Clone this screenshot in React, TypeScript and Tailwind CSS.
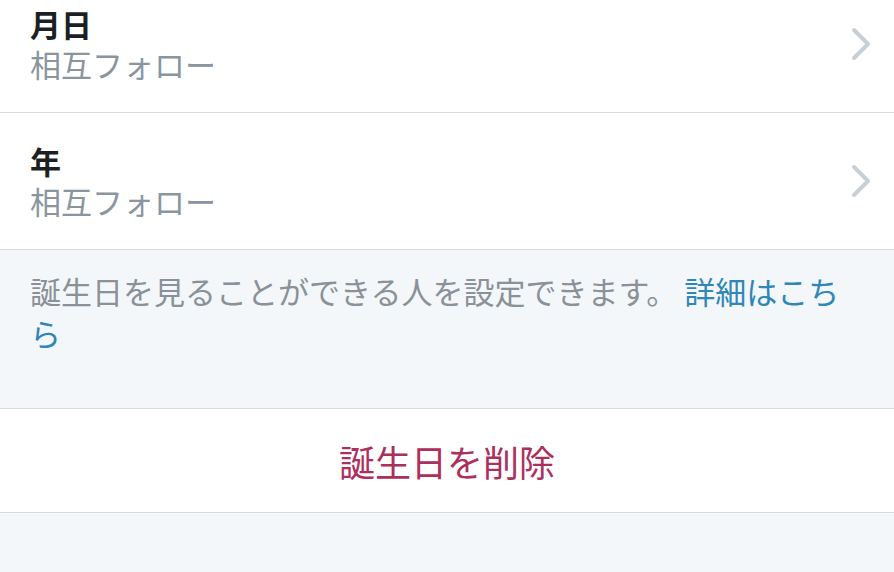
const font = { fontFamily: '"Noto Sans CJK JP", "Noto Sans", sans-serif' };

function Chevron() {
  return (
    <svg width="22" height="36" viewBox="0 0 22 36" className="text-[#c8d0d7]">
      <polyline points="4,4 18,18 4,32" fill="none" stroke="currentColor" strokeWidth="4" strokeLinecap="round" strokeLinejoin="round" />
    </svg>
  );
}

function SettingRow({ title, value }: { title: string; value: string }) {
  return (
    <div className="flex items-center justify-between bg-white pl-[30px] pr-[22px] py-[28px] border-b border-[#d6dbe0]">
      <div className="flex flex-col">
        <span className="text-[31px] leading-[40px] font-bold text-[#1c1f23]">{title}</span>
        <span className="text-[31px] leading-[40px] text-[#8a959e]">{value}</span>
      </div>
      <Chevron />
    </div>
  );
}

export default function App() {
  return (
    <div className="w-[894px] h-[572px] overflow-hidden bg-[#f4f7f9]" style={font}>
      <div className="-mt-[24px]">
        <SettingRow title="月日" value="相互フォロー" />
        <SettingRow title="年" value="相互フォロー" />
      </div>
      <div className="bg-[#f4f7f9] pl-[30px] pr-[40px] pt-[20px] pb-[54px] border-b border-[#d6dbe0]">
        <p className="text-[31px] leading-[42px] text-[#8a9198]">
          誕生日を見ることができる人を設定できます。 <span className="text-[#2e87b8]">詳細はこちら</span>
        </p>
      </div>
      <div className="bg-white h-[104px] flex items-center justify-center border-b border-[#d6dbe0]">
        <span className="text-[36px] text-[#ac2f5c]">誕生日を削除</span>
      </div>
    </div>
  );
}
